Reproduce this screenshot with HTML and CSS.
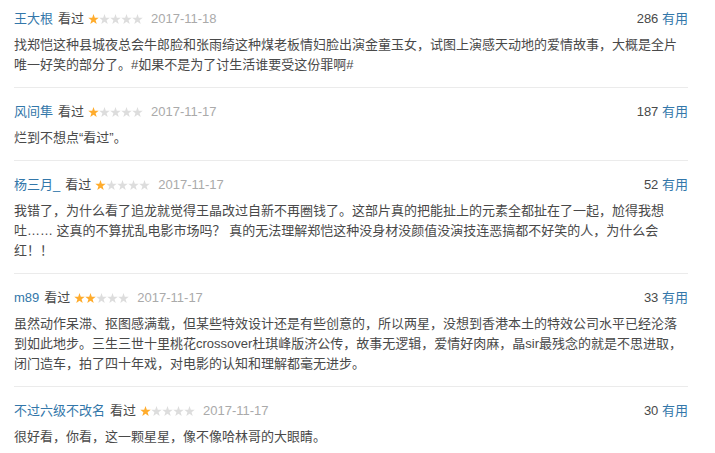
FILE: index.html
```html
<!DOCTYPE html>
<html lang="zh-CN">
<head>
<meta charset="utf-8">
<title>短评</title>
<link rel="stylesheet" href="styles.css">
</head>
<body>
<svg class="defs" width="0" height="0" aria-hidden="true">
  <defs>
    <symbol id="star" viewBox="0 0 11 11">
      <polygon points="5.5,0 6.79,3.72 10.73,3.8 7.59,6.18 8.73,9.95 5.5,7.7 2.27,9.95 3.41,6.18 0.27,3.8 4.21,3.72"/>
    </symbol>
  </defs>
</svg>
<div class="list">
  <div class="item">
    <div class="head">
      <div class="info">
        <span class="name">王大根</span>
        <span class="seen">看过</span>
        <span class="stars"><svg class="on"><use href="#star"/></svg><svg><use href="#star"/></svg><svg><use href="#star"/></svg><svg><use href="#star"/></svg><svg><use href="#star"/></svg></span>
        <span class="date">2017-11-18</span>
      </div>
      <div class="votes"><span class="num">286</span> <span class="useful">有用</span></div>
    </div>
    <p class="text">找郑恺这种县城夜总会牛郎脸和张雨绮这种煤老板情妇脸出演金童玉女，试图上演感天动地的爱情故事，大概是全片唯一好笑的部分了。#如果不是为了讨生活谁要受这份罪啊#</p>
  </div>
  <div class="item">
    <div class="head">
      <div class="info">
        <span class="name">风间隼</span>
        <span class="seen">看过</span>
        <span class="stars"><svg class="on"><use href="#star"/></svg><svg><use href="#star"/></svg><svg><use href="#star"/></svg><svg><use href="#star"/></svg><svg><use href="#star"/></svg></span>
        <span class="date">2017-11-17</span>
      </div>
      <div class="votes"><span class="num">187</span> <span class="useful">有用</span></div>
    </div>
    <p class="text">烂到不想点“看过”。</p>
  </div>
  <div class="item">
    <div class="head">
      <div class="info">
        <span class="name">杨三月_</span>
        <span class="seen">看过</span>
        <span class="stars"><svg class="on"><use href="#star"/></svg><svg><use href="#star"/></svg><svg><use href="#star"/></svg><svg><use href="#star"/></svg><svg><use href="#star"/></svg></span>
        <span class="date">2017-11-17</span>
      </div>
      <div class="votes"><span class="num">52</span> <span class="useful">有用</span></div>
    </div>
    <p class="text">我错了，为什么看了追龙就觉得王晶改过自新不再圈钱了。这部片真的把能扯上的元素全都扯在了一起，尬得我想吐…… 这真的不算扰乱电影市场吗？ 真的无法理解郑恺这种没身材没颜值没演技连恶搞都不好笑的人，为什么会红！！</p>
  </div>
  <div class="item">
    <div class="head">
      <div class="info">
        <span class="name">m89</span>
        <span class="seen">看过</span>
        <span class="stars"><svg class="on"><use href="#star"/></svg><svg class="on"><use href="#star"/></svg><svg><use href="#star"/></svg><svg><use href="#star"/></svg><svg><use href="#star"/></svg></span>
        <span class="date">2017-11-17</span>
      </div>
      <div class="votes"><span class="num">33</span> <span class="useful">有用</span></div>
    </div>
    <p class="text">虽然动作呆滞、抠图感满载，但某些特效设计还是有些创意的，所以两星，没想到香港本土的特效公司水平已经沦落到如此地步。三生三世十里桃花crossover杜琪峰版济公传，故事无逻辑，爱情好肉麻，晶sir最残念的就是不思进取，闭门造车，拍了四十年戏，对电影的认知和理解都毫无进步。</p>
  </div>
  <div class="item">
    <div class="head">
      <div class="info">
        <span class="name">不过六级不改名</span>
        <span class="seen">看过</span>
        <span class="stars"><svg class="on"><use href="#star"/></svg><svg><use href="#star"/></svg><svg><use href="#star"/></svg><svg><use href="#star"/></svg><svg><use href="#star"/></svg></span>
        <span class="date">2017-11-17</span>
      </div>
      <div class="votes"><span class="num">30</span> <span class="useful">有用</span></div>
    </div>
    <p class="text">很好看，你看，这一颗星星，像不像哈林哥的大眼睛。</p>
  </div>
</div>
</body>
</html>
```

FILE: styles.css
```css
* {
  box-sizing: border-box;
}

html, body {
  margin: 0;
  padding: 0;
  background: #ffffff;
}

body {
  font-family: "Liberation Sans", "Noto Sans CJK SC", sans-serif;
  font-size: 13px;
  color: #494949;
}

.defs {
  position: absolute;
  width: 0;
  height: 0;
  overflow: hidden;
}

.list {
  width: 674px;
  margin-left: 14px;
}

.item {
  padding: 14px 0 12px;
  border-bottom: 1px solid #ebebeb;
}

.item:first-child {
  padding-top: 9px;
}

.item:last-child {
  border-bottom: none;
}

.head {
  display: flex;
  justify-content: space-between;
  align-items: center;
  height: 20px;
  line-height: 20px;
  margin-bottom: 6px;
}

.info {
  display: flex;
  align-items: center;
}

.name {
  color: #3377aa;
  margin-right: 5px;
}

.seen {
  color: #494949;
  margin-right: 4px;
}

.stars {
  display: inline-flex;
  align-items: center;
  margin-right: 8px;
}

.stars svg {
  width: 11px;
  height: 11px;
  fill: #dddddd;
  display: block;
}

.stars svg.on {
  fill: #ffac2d;
}

.date {
  color: #aaaaaa;
}

.votes {
  color: #494949;
}

.useful {
  color: #3377aa;
}

.text {
  margin: 0;
  line-height: 20px;
  color: #494949;
}
```
